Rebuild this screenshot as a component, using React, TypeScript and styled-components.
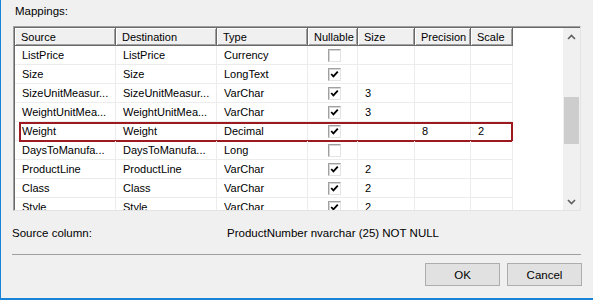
import styled, { createGlobalStyle, css } from 'styled-components';

interface Mapping {
    source: string;
    destination: string;
    type: string;
    nullable: boolean;
    size?: string;
    precision?: string;
    scale?: string;
    selected?: boolean;
}

const mappings: Mapping[] = [
    { source: 'ListPrice', destination: 'ListPrice', type: 'Currency', nullable: false },
    { source: 'Size', destination: 'Size', type: 'LongText', nullable: true },
    { source: 'SizeUnitMeasur...', destination: 'SizeUnitMeasur...', type: 'VarChar', nullable: true, size: '3' },
    { source: 'WeightUnitMea...', destination: 'WeightUnitMea...', type: 'VarChar', nullable: true, size: '3' },
    { source: 'Weight', destination: 'Weight', type: 'Decimal', nullable: true, precision: '8', scale: '2', selected: true },
    { source: 'DaysToManufa...', destination: 'DaysToManufa...', type: 'Long', nullable: false },
    { source: 'ProductLine', destination: 'ProductLine', type: 'VarChar', nullable: true, size: '2' },
    { source: 'Class', destination: 'Class', type: 'VarChar', nullable: true, size: '2' },
    { source: 'Style', destination: 'Style', type: 'VarChar', nullable: true, size: '2' },
];

const columns = ['Source', 'Destination', 'Type', 'Nullable', 'Size', 'Precision', 'Scale'];
const template = '101px 101px 91px 50px 57px 56px 42px';

const GlobalStyle = createGlobalStyle`
    html, body {
        margin: 0;
        padding: 0;
        background: #f0f0f0;
    }
    body {
        font-family: "Liberation Sans", Arial, sans-serif;
        font-size: 11px;
        color: #000;
    }
`

const Window = styled.div`
    width: 593px;
    height: 300px;
    box-sizing: border-box;
    border-left: 1px solid #1883d7;
    border-bottom: 2px solid #1883d7;
    padding: 0 11px;
    display: flex;
    flex-direction: column;
    overflow: hidden;
`

const SectionLabel = styled.div`
    height: 26px;
    box-sizing: border-box;
    padding: 3px 0 0 3px;
    line-height: 16px;
    font-size: 11.5px;
`

const GridFrame = styled.div`
    margin-left: 1px;
    width: 568px;
    height: 185px;
    box-sizing: border-box;
    border-top: 1px solid #a0a0a0;
    border-left: 1px solid #a0a0a0;
    border-right: 1px solid #e3e3e3;
    border-bottom: 1px solid #e3e3e3;
    box-shadow: inset 1px 1px 0 #696969;
    padding: 1px 0 0 1px;
    display: flex;
`

const TableArea = styled.div`
    flex: 1;
    background: #fff;
    overflow: hidden;
`

const HeaderRow = styled.div`
    display: grid;
    grid-template-columns: ${template};
    width: 498px;
    height: 18px;
`

const HeaderCell = styled.div`
    box-sizing: border-box;
    display: flex;
    align-items: center;
    padding-left: 6px;
    background: #f0f0f0;
    border-right: 1px solid #696969;
    border-bottom: 1px solid #696969;
    box-shadow: inset 1px 1px 0 #fff, inset -1px -1px 0 #a0a0a0;
    white-space: nowrap;
    overflow: hidden;
`

const Row = styled.div<{ $selected?: boolean }>`
    position: relative;
    display: grid;
    grid-template-columns: ${template};
    width: 498px;
    height: 19px;

    ${p => p.$selected && css`
        &::after {
            content: '';
            position: absolute;
            top: 0;
            bottom: -1px;
            left: 4px;
            right: 0;
            border: 2px solid #9c1a1f;
        }
    `}
`

const Cell = styled.div<{ $center?: boolean }>`
    box-sizing: border-box;
    display: flex;
    align-items: center;
    justify-content: ${p => (p.$center ? 'center' : 'flex-start')};
    padding-left: ${p => (p.$center ? '3px' : '7px')};
    border-right: 1px solid #ececec;
    border-bottom: 1px solid #ececec;
    white-space: nowrap;
    overflow: hidden;
`

const CheckBox = styled.span`
    width: 13px;
    height: 13px;
    box-sizing: border-box;
    display: flex;
    align-items: center;
    justify-content: center;
    background: #fff;
    border: 1px solid;
    border-color: #a0a0a0 #e3e3e3 #e3e3e3 #a0a0a0;
    box-shadow: inset 1px 1px 0 #d6d6d6;
`

const ScrollBar = styled.div`
    width: 17px;
    background: #f0f0f0;
    display: flex;
    flex-direction: column;
`

const ScrollButton = styled.div`
    height: 17px;
    display: flex;
    align-items: center;
    justify-content: center;
`

const ScrollTrack = styled.div`
    flex: 1;
`

const Thumb = styled.div<{ $offset: number; $size: number }>`
    margin: ${p => p.$offset}px 1px 0;
    height: ${p => p.$size}px;
    background: #cdcdcd;
`

const InfoRow = styled.div`
    display: grid;
    grid-template-columns: 215px 1fr;
    margin-top: 14px;
    line-height: 16px;
    font-size: 11.5px;
`

const Separator = styled.div`
    margin: 13px 1px 0 0;
    height: 1px;
    background: #a0a0a0;
`

const ButtonBar = styled.div`
    display: flex;
    justify-content: flex-end;
    gap: 7px;
    margin-top: 8px;
`

const Button = styled.button`
    width: 75px;
    height: 23px;
    box-sizing: border-box;
    padding: 0;
    border: 1px solid #adadad;
    background: #e1e1e1;
    font: inherit;
    font-size: 11.5px;
    color: #000;
`

const Chevron = ({ up }: { up: boolean }) => (
    <svg width="9" height="6" viewBox="0 0 9 6">
        <polyline
            points={up ? '1,5 4.5,1.5 8,5' : '1,1 4.5,4.5 8,1'}
            fill="none"
            stroke="#606060"
            strokeWidth="1.6"
        />
    </svg>
)

const Tick = () => (
    <svg width="9" height="9" viewBox="0 0 9 9">
        <polyline points="1.2,4 3.4,6.4 7.8,1.6" fill="none" stroke="#000" strokeWidth="1.8" />
    </svg>
)

export default function App() {
    return (
        <>
            <GlobalStyle />
            <Window>
                <SectionLabel>Mappings:</SectionLabel>
                <GridFrame>
                    <TableArea>
                        <HeaderRow>
                            {columns.map(c => (
                                <HeaderCell key={c}>{c}</HeaderCell>
                            ))}
                        </HeaderRow>
                        {mappings.map((m, i) => (
                            <Row key={i} $selected={m.selected}>
                                <Cell>{m.source}</Cell>
                                <Cell>{m.destination}</Cell>
                                <Cell>{m.type}</Cell>
                                <Cell $center>
                                    <CheckBox>{m.nullable && <Tick />}</CheckBox>
                                </Cell>
                                <Cell>{m.size}</Cell>
                                <Cell>{m.precision}</Cell>
                                <Cell>{m.scale}</Cell>
                            </Row>
                        ))}
                    </TableArea>
                    <ScrollBar>
                        <ScrollButton><Chevron up /></ScrollButton>
                        <ScrollTrack>
                            <Thumb $offset={52} $size={47} />
                        </ScrollTrack>
                        <ScrollButton><Chevron up={false} /></ScrollButton>
                    </ScrollBar>
                </GridFrame>
                <InfoRow>
                    <span>Source column:</span>
                    <span>ProductNumber nvarchar (25) NOT NULL</span>
                </InfoRow>
                <Separator />
                <ButtonBar>
                    <Button>OK</Button>
                    <Button>Cancel</Button>
                </ButtonBar>
            </Window>
        </>
    )
}
